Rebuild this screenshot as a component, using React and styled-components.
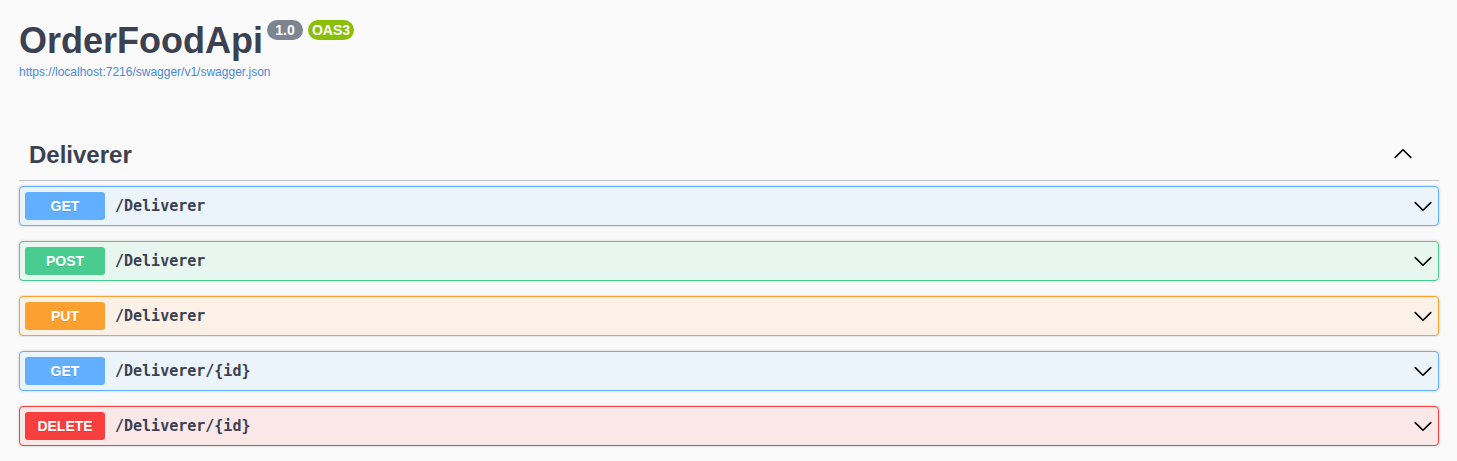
import React, { useState } from 'react';
import styled, { createGlobalStyle } from 'styled-components';

const Global = createGlobalStyle`
  *, *::before, *::after { box-sizing: border-box; }
  body {
    margin: 0;
    background: #fafafa;
    color: #3b4151;
    font-family: "Liberation Sans", Arial, sans-serif;
  }
`;

const methodColors = {
  get: { solid: '#61affe', tint: '#ebf3fb' },
  post: { solid: '#49cc90', tint: '#e8f6f0' },
  put: { solid: '#fca130', tint: '#fbf1e6' },
  delete: { solid: '#f93e3e', tint: '#fae7e7' },
};

const Page = styled.main`
  padding: 20px 18px 15px 19px;
`;

const Info = styled.header`
  margin-bottom: 50px;
`;

const TitleRow = styled.div`
  display: flex;
  align-items: flex-start;
`;

const Title = styled.h1`
  margin: 0 4px 0 0;
  font-size: 36px;
  line-height: 41px;
`;

const Badges = styled.div`
  display: flex;
  gap: 5px;
`;

const Badge = styled.span`
  min-width: 36px;
  padding: 2px 4px;
  border-radius: 57px;
  background: ${(p) => (p.$oas ? '#89bf04' : '#7d8492')};
  color: #fff;
  font-size: 14px;
  line-height: 16px;
  font-weight: 700;
  text-align: center;
`;

const SpecLink = styled.a`
  display: block;
  width: fit-content;
  margin-top: 4px;
  color: #4a88e0;
  font-size: 12px;
  line-height: 14px;
  text-decoration: none;
`;

const TagHeader = styled.div`
  display: flex;
  align-items: center;
  justify-content: space-between;
  height: 52px;
  margin-bottom: 5px;
  padding: 0 26px 0 10px;
  border-bottom: 1px solid rgba(59, 65, 81, 0.3);
`;

const TagTitle = styled.h2`
  margin: 0;
  font-size: 24px;
  line-height: 28px;
`;

const IconButton = styled.button`
  display: flex;
  padding: 0;
  border: 0;
  background: none;
  color: #000;
  cursor: pointer;
`;

const Operations = styled.div`
  display: flex;
  flex-direction: column;
  gap: 15px;
`;

const Operation = styled.button`
  display: flex;
  align-items: center;
  width: 100%;
  height: 40px;
  padding: 5px;
  border: 1px solid ${(p) => methodColors[p.$method].solid};
  border-radius: 4px;
  background: ${(p) => methodColors[p.$method].tint};
  box-shadow: 0 0 3px rgba(0, 0, 0, 0.19);
  color: #000;
  text-align: left;
  cursor: pointer;
`;

const Method = styled.span`
  width: 80px;
  border-radius: 3px;
  background: ${(p) => methodColors[p.$method].solid};
  color: #fff;
  font: 700 14px/28px "Liberation Sans", Arial, sans-serif;
  text-align: center;
  text-shadow: 0 1px 0 rgba(0, 0, 0, 0.1);
`;

const Path = styled.span`
  flex: 1;
  padding: 0 10px;
  color: #3b4151;
  font: 700 15px/20px Consolas, "DejaVu Sans Mono", monospace;
`;

const Arrow = ({ up }) => (
  <svg
    width="20"
    height="20"
    viewBox="0 0 20 20"
    fill="none"
    stroke="currentColor"
    strokeWidth="1.6"
    strokeLinecap="round"
    strokeLinejoin="round"
    aria-hidden="true"
  >
    <path d={up ? 'M2.2 12.4 10 4.8l7.8 7.6' : 'M2.2 6.6 10 14.2l7.8-7.6'} />
  </svg>
);

const operations = [
  { method: 'get', path: '/Deliverer' },
  { method: 'post', path: '/Deliverer' },
  { method: 'put', path: '/Deliverer' },
  { method: 'get', path: '/Deliverer/{id}' },
  { method: 'delete', path: '/Deliverer/{id}' },
];

export default function App() {
  const [open, setOpen] = useState(true);
  return (
    <>
      <Global />
      <Page>
        <Info>
          <TitleRow>
            <Title>OrderFoodApi</Title>
            <Badges>
              <Badge>1.0</Badge>
              <Badge $oas>OAS3</Badge>
            </Badges>
          </TitleRow>
          <SpecLink href="https://localhost:7216/swagger/v1/swagger.json">
            https://localhost:7216/swagger/v1/swagger.json
          </SpecLink>
        </Info>
        <section>
          <TagHeader>
            <TagTitle>Deliverer</TagTitle>
            <IconButton aria-label="Toggle Deliverer" aria-expanded={open} onClick={() => setOpen(!open)}>
              <Arrow up={open} />
            </IconButton>
          </TagHeader>
          {open && (
            <Operations>
              {operations.map(({ method, path }) => (
                <Operation key={method + path} $method={method}>
                  <Method $method={method}>{method.toUpperCase()}</Method>
                  <Path>{path}</Path>
                  <Arrow />
                </Operation>
              ))}
            </Operations>
          )}
        </section>
      </Page>
    </>
  );
}
